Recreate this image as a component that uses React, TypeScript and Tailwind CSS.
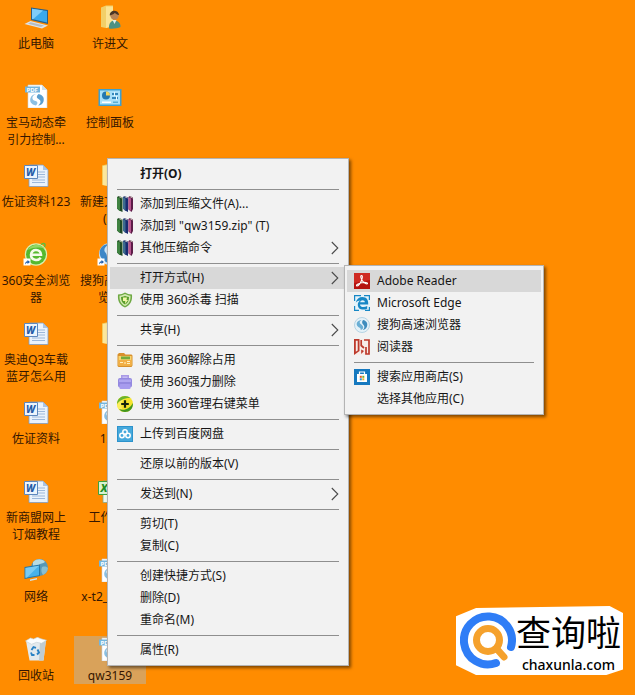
import React from 'react';
import clsx from 'clsx';

type Icon = () => React.ReactElement;

interface Shortcut {
    label: string,
    icon: Icon,
    selected?: boolean
}

interface Entry {
    label: string,
    icon?: Icon,
    bold?: boolean,
    active?: boolean,
    arrow?: boolean,
    submenu?: Entry[][]
}

/* ---------- desktop icons (28x24) ---------- */

const ComputerIcon = () => (
    <svg viewBox="0 0 28 24" className="h-6 w-7">
        <path d="M9 2.500 26 5v14L9 15z" fill="#2b5f86" />
        <path d="M10 3.800 25 6v11.600L10 14z" fill="#39a9ec" />
        <path d="M10 3.800 21 5.400 11 14.200 10 14z" fill="#7fcdf8" />
        <path d="M8.500 16 26 20.500 20 23.500 2.500 19z" fill="#dfe3e6" />
        <path d="M8.500 17.200 22 20.500 19 22 6 18.800z" fill="#b5bcc4" />
    </svg>
);

const UserFolderIcon = () => (
    <svg viewBox="0 0 28 24" className="h-6 w-7">
        <path d="M5 2.500 10 .5h7V21l-7 2-5-1z" fill="#f2cf68" />
        <path d="M10 1.500h7V21l-7 2z" fill="#fbe394" />
        <path d="M13 23.500c-.5-5 2-8 5.500-8s6.500 3 6 6.500c-3 1.500-8 2-11.500 1.500z" fill="#4d9183" />
        <path d="m16.500 15 2 4 2-4z" fill="#e3efe9" />
        <circle cx="18.500" cy="10.500" r="4.200" fill="#b98557" />
        <path d="M13.800 10.500c-.6-6 8.800-6.500 9.300-.5-2 0-3-1.500-4.500-2-1 1.500-3 1.500-4.800 2.500z" fill="#4b3524" />
    </svg>
);

const PdfDocIcon = () => (
    <svg viewBox="0 0 28 24" className="h-6 w-7">
        <path d="M6 1h14l5 5v18H6z" fill="#fff" stroke="#c9d4dc" strokeWidth=".6" />
        <path d="M20 1v5h5z" fill="#cfe0ea" />
        <path d="M3 2.500h15v6H3z" fill="#74b5dc" />
        <text x="4.500" y="7.800" fontSize="6" fontWeight="700" fill="#fff">PDF</text>
        <path d="M14.500 10c-5 1-5.500 6-1 7 2.500.7 2.500 2.500.5 4.500-5-1-6.500-4-5.500-7.500.8-2.500 3.500-4 6-4z" fill="#8cc0e2" />
        <path d="M16.500 10c4.500 1 6 4 5 7.500-.8 2.500-3 4-5.500 4 3-2 3.500-5 .5-6.500-2.300-1-2.300-3 0-5z" fill="#5a9fcf" />
    </svg>
);

const ControlPanelIcon = () => (
    <svg viewBox="0 0 28 24" className="h-6 w-7">
        <path d="M2.500 5h23v17h-23z" fill="#3d9fcf" />
        <path d="M4 6.500h20v14H4z" fill="#a9e0f7" />
        <circle cx="10" cy="11.500" r="4" fill="#2478ae" />
        <path d="M10 11.500v-4a4 4 0 0 1 4 4z" fill="#f4d65e" />
        <path d="M16 9h6v2h-6zM16 13h6v2h-6z" fill="#3387ba" />
        <path d="M18 8h1v4h-1zM20 12h1v4h-1z" fill="#e9faff" />
        <path d="M6 17.500h9v1.500H6z" fill="#fff" />
        <path d="M17 17.500h5v1.500h-5z" fill="#59aed3" />
    </svg>
);

const WordIcon = () => (
    <svg viewBox="0 0 28 24" className="h-6 w-7">
        <path d="M9 2h12l5 5v16.500H7V2z" fill="#eaf2fb" stroke="#7e9cc3" strokeWidth=".8" />
        <path d="M21 2v5h5z" fill="#a9c3e2" />
        <path d="M16 9h7M16 11.500h7M16 14h7M10 17h13M10 19.500h13" stroke="#9db8da" />
        <path d="M2.500 2.500h13v13h-13z" fill="#edf4fc" stroke="#5e88bd" />
        <text x="4" y="13" fontSize="10" fontWeight="800" fontStyle="italic" fill="#255ba7">W</text>
    </svg>
);

const ExcelIcon = () => (
    <svg viewBox="0 0 28 24" className="h-6 w-7">
        <path d="M7 2h14l5 5v16.500H7z" fill="#f0f8ee" stroke="#87a886" strokeWidth=".8" />
        <path d="M2.500 2.500h13v13h-13z" fill="#d9f2d1" stroke="#3fa13c" />
        <text x="4.500" y="13" fontSize="11" fontWeight="800" fontStyle="italic" fill="#1e8c24">X</text>
    </svg>
);

const FolderIcon = () => (
    <svg viewBox="0 0 28 24" className="h-6 w-7">
        <path d="M6 2.500 12 1h9v21l-9 1-6-1z" fill="#f2cb5c" />
        <path d="M7 3 12 2h9v20l-9 1-5-1z" fill="#fce79c" />
    </svg>
);

const ShortcutArrow = () => (
    <g>
        <path d="M1.500 16.500h7v7h-7z" fill="#fff" />
        <path d="M3 22.500c0-2 .8-3 2.500-3.300V18L8 20l-2.500 2v-1.200c-1 0-1.800.5-2.500 1.700z" fill="#1f5fae" />
    </g>
);

const SafeBrowserIcon = () => (
    <svg viewBox="0 0 28 24" className="h-6 w-7">
        <circle cx="14" cy="12.500" r="11.200" fill="#d9efae" />
        <circle cx="14" cy="12.500" r="10" fill="#56b92f" />
        <path d="M6 8a10 10 0 0 1 17-1c-5-2-11-2-17 1z" fill="#93d864" />
        <path d="M9 12.800h10c0-6.300-10-6.500-10 0 0 5.700 7 6.700 9.700 3" fill="none" stroke="#f4fbe9" strokeWidth="2.600" />
        <path d="M19 2.500c3-2 5-1 3.500 2.500" fill="none" stroke="#66bd37" strokeWidth="1.500" />
        <ShortcutArrow />
    </svg>
);

const SogouDesktopIcon = () => (
    <svg viewBox="0 0 28 24" className="h-6 w-7">
        <circle cx="14" cy="12" r="11" fill="#cfe6f6" />
        <path d="M13 2C6 2 2.500 8 4 13c1 4 5 7 9 8-3-5-1-8-4-11-2-3 1-6 4-8z" fill="#3c87c7" />
        <path d="M14 3c8 0 11 6 10 11-1 4-5 7-9 7 4-4 3-8 0-10-3-3-3-5-1-8z" fill="#5aa4d9" />
        <ShortcutArrow />
    </svg>
);

const NetworkIcon = () => (
    <svg viewBox="0 0 28 24" className="h-6 w-7">
        <circle cx="17.500" cy="9.500" r="8.500" fill="#5798b6" />
        <path d="M11 4c4-4 10-3 12 0-2 2-5 1-6 3s-4 2-6 1z" fill="#b7dbe3" />
        <path d="M20 9c3-1 5 0 6 1-.5 4-3 6-5 7-2-3-2-5-1-8z" fill="#89bfd0" />
        <path d="M2.500 9 18 6.500V18L2.500 21z" fill="#2677a8" />
        <path d="M3.500 10 17 7.700v9.500L3.500 19.800z" fill="#48b2ea" />
        <path d="M3.500 10 17 7.700 5 19.500l-1.500.3z" fill="#79cbf3" />
        <path d="M8 21.500 15 20v1.500L8 23z" fill="#d2e2ea" />
    </svg>
);

const RecycleIcon = () => (
    <svg viewBox="0 0 28 24" className="h-6 w-7">
        <path d="m4 4 20-1-2.500 20.500h-14z" fill="#e3eaed" />
        <path d="m18 4 6-1-2.500 20.500H17z" fill="#bfccd2" />
        <path d="m3.500 4 5-3 3 1 4-1.700 3.500 1.500 5.500 1.500-5 3-5-1-5 2z" fill="#fbfdfd" stroke="#c2ced4" strokeWidth=".6" />
        <path d="m9.500 13 2-3 2.500.8M15.500 12.500l1.500 3-2 2M12.500 18H10l-1-2.500" fill="none" stroke="#2982c4" strokeWidth="1.900" />
    </svg>
);

/* ---------- menu icons (16x16) ---------- */

const RarIcon = () => (
    <svg viewBox="0 0 16 16" className="size-4">
        <path d="m0 1 2-1 3.500 1.500V16L2 14.500l-2-2z" fill="#1f4a24" />
        <path d="m0 1 3 1.500V15l-3-2.500z" fill="#3f8241" />
        <path d="m6 1 1.500-1L11 1.500V16l-3-1.500-2-2z" fill="#192b70" />
        <path d="m6 1 2.500 1.500V15L6 12.500z" fill="#3d6b8f" />
        <path d="m11.500 1 1.500-1 3 1.500V13l-1.500 3-3-2.500z" fill="#5c1c48" />
        <path d="M11.500 1 14 2.500V15l-2.500-2z" fill="#b8558f" />
        <path d="m2 .7 3 1.300M7.500.7l3 1.300M13 .7l2.700 1.300" stroke="#dddacb" strokeWidth=".8" />
    </svg>
);

const ShieldIcon = () => (
    <svg viewBox="0 0 16 16" className="size-4">
        <path d="M1 2.500C4 2.500 6 1.500 8 .5c2 1 4 2 7 2 .5 6-1 10.500-7 13-6-2.500-7.500-7-7-13z" fill="#6fa944" />
        <path d="M2.500 3.800C5 3.600 6.500 2.800 8 2c1.500.8 3 1.600 5.500 1.800C13.700 9 12 12 8 14 4 12 2.300 9 2.500 3.800z" fill="#d6ebb5" />
        <path d="M4 5c2 0 3-.6 4-1.200C9 4.400 10 5 12 5c0 3.500-1 6-4 7.500C5 11 4 8.500 4 5z" fill="#5a9e2c" />
        <path d="M6 5.500h4L9.500 8H11l-3 4 .3-3H6z" fill="#f3f7a8" />
    </svg>
);

const UnlockFolderIcon = () => (
    <svg viewBox="0 0 16 16" className="size-4">
        <path d="M.5 2.500 2 1h5l1.500 1.500h6l1 1v10l-1 1.500h-13l-1-1z" fill="#d8902b" />
        <path d="M1.500 4h13v9.500h-13z" fill="#f9d46c" />
        <path d="M4 4.500h9v2.800H4z" fill="#73aa3c" />
        <path d="M1.500 8h13v5.500h-13z" fill="#f3ae45" />
        <path d="M3 10.500h3M8 10v2M10 11.500h3M10 9.500h3" stroke="#fff2c2" />
    </svg>
);

const ForceDeleteIcon = () => (
    <svg viewBox="0 0 16 16" className="size-4">
        <path d="M4 1h8v5H4z" fill="#a99ae5" />
        <path d="M5.500 2.500h5V6h-5z" fill="#c6bcf2" />
        <rect x="1" y="4" width="14" height="9.500" rx="2" fill="#9489e0" />
        <path d="M2 5.500h12v2.500H2z" fill="#b0a6f0" />
        <rect x="2.500" y="10" width="11" height="5" rx="1" fill="#a79bee" />
    </svg>
);

const PlusBallIcon = () => (
    <svg viewBox="0 0 16 16" className="size-4">
        <circle cx="8" cy="8" r="8" fill="#f6e32b" />
        <path d="M.2 10C1 4 5 1 10 1.500c-4 1.500-6 4-5.500 9C4.600 13 6 15 8 16 4 16 1 14 .2 10z" fill="#fcee5b" />
        <path d="M2 13c5 2 11 0 13.800-6C16.500 12 13 16 8 16c-2.500 0-4.500-1-6-3z" fill="#41961f" />
        <path d="M0 8C0 3 4 0 8 0c2 0 4 .7 5.500 2C8 1.500 3 4 0 8z" fill="#6cb52d" />
        <path d="M8 4.200v7.600M4.200 8h7.600" stroke="#15240d" strokeWidth="2.200" />
    </svg>
);

const CloudDiskIcon = () => (
    <svg viewBox="0 0 16 16" className="size-4">
        <path d="M0 0h16v16H0z" fill="#2d93cc" />
        <path d="M1 1h14v14H1z" fill="#46a9dc" />
        <g fill="none" stroke="#fff" strokeWidth="1.500">
            <circle cx="8" cy="6" r="2.200" />
            <circle cx="5" cy="9.500" r="2.200" />
            <circle cx="11" cy="9.500" r="2.200" />
        </g>
    </svg>
);

const AdobeIcon = () => (
    <svg viewBox="0 0 16 16" className="size-4">
        <path d="M0 0h16v16H0z" fill="#b5120f" />
        <path d="M0 0h16v7L0 10z" fill="#cf2a22" />
        <path d="M7.500 2.500c1.500 0 .8 3-.2 5.500S4 13.500 2.800 13c-1.300-.8 1.700-2.700 5-3.300s6-.2 5.700.9c-.4 1.200-3.500-.4-5-2.600S6 2.700 7.500 2.500z" fill="none" stroke="#fff" strokeWidth="1.100" />
    </svg>
);

const EdgeIcon = () => (
    <svg viewBox="0 0 16 16" className="size-4">
        <path d="M0 0h16v16H0z" fill="#e4f3fa" />
        <path d="M0 0h7v1.200H1.200V6H0zM10 0h6v5h-1.200V1.200H10zM0 11h1.200v3.800H5V16H0zM14.800 12H16v4h-5v-1.200h3.800z" fill="#1787c5" />
        <path d="M1.800 7.500C2.600 4 5 2 8.500 2c4 0 5.700 2.800 5.700 6v1.500H6c.2 3 4.300 3.300 7.200 1.500v2.700c-4.700 2-9.400.5-9.400-4 0-2 1-3.400 2.500-4.200-1.700 0-3.300.7-4.500 2z" fill="#1787c5" />
        <path d="M6.100 7.300c.2-2.800 4.900-2.800 4.800 0z" fill="#e4f3fa" />
    </svg>
);

const SogouIcon = () => (
    <svg viewBox="0 0 16 16" className="size-4">
        <circle cx="8" cy="8" r="7.500" fill="#e4f1f8" stroke="#b5d3e3" />
        <path d="M7.500 3C3.500 3.300 2 6 3 8.500c.8 1.800 2.700 2 3.500 3 .4.600.3 1 0 1.500 2.300-.3 3.500-2.500 2-4.300C7.500 7.300 5.500 7 5.700 5.300 5.800 4.200 6.700 3.500 7.500 3z" fill="#6aaed4" />
        <path d="M9 3c3.800.5 5.200 4 3.800 7-.9 1.800-2.300 2.700-4 3 1.800-1.700 2.200-3.800.6-5.300C8 6.400 7.600 4.800 9 3z" fill="#3f8cbd" />
    </svg>
);

const ReaderIcon = () => (
    <svg viewBox="0 0 16 16" className="size-4">
        <path d="M0 0h16v16H0z" fill="#f7ece8" />
        <path d="M0 0h5.500v12L0 16zm1.800 1.800v11L3.700 11.500V1.800z" fillRule="evenodd" fill="#bd3a2c" />
        <path d="M7.200 1v5.500L10 9M10 1h5v14h-3V8" fill="none" stroke="#bd3a2c" strokeWidth="1.700" />
        <path d="M7.200 10.500v4.500L10 12z" fill="#bd3a2c" />
    </svg>
);

const StoreIcon = () => (
    <svg viewBox="0 0 16 16" className="size-4">
        <path d="M0 0h16v16H0z" fill="#1679bf" />
        <path d="M5.500 5V3h5v2" fill="none" stroke="#fff" strokeWidth="1.200" />
        <path d="M3 5h10v8H3z" fill="#fff" />
        <path d="M5.800 6.800h2v2h-2z" fill="#e5582b" />
        <path d="M8.300 6.800h2v2h-2z" fill="#7cb52c" />
        <path d="M5.800 9.300h2v2h-2z" fill="#2b96d8" />
        <path d="M8.300 9.300h2v2h-2z" fill="#efb428" />
    </svg>
);

const ArrowIcon = () => (
    <svg viewBox="0 0 8 14" className="h-3.5 w-2">
        <path d="m.8 1 6 6-6 6" fill="none" stroke="#4a4a4a" strokeWidth="1.100" />
    </svg>
);

const shortcuts: Shortcut[] = [
    { label: '此电脑', icon: ComputerIcon },
    { label: '许进文', icon: UserFolderIcon },
    { label: '宝马动态牵\n引力控制...', icon: PdfDocIcon },
    { label: '控制面板', icon: ControlPanelIcon },
    { label: '佐证资料123', icon: WordIcon },
    { label: '新建文件夹\n(2)', icon: FolderIcon },
    { label: '360安全浏览\n器', icon: SafeBrowserIcon },
    { label: '搜狗高速浏\n览器', icon: SogouDesktopIcon },
    { label: '奥迪Q3车载\n蓝牙怎么用', icon: WordIcon },
    { label: '', icon: FolderIcon },
    { label: '佐证资料', icon: WordIcon },
    { label: '123', icon: PdfDocIcon },
    { label: '新商盟网上\n订烟教程', icon: WordIcon },
    { label: '工作簿1', icon: ExcelIcon },
    { label: '网络', icon: NetworkIcon },
    { label: 'x-t2_ 3159', icon: PdfDocIcon },
    { label: '回收站', icon: RecycleIcon },
    { label: 'qw3159', icon: PdfDocIcon, selected: true }
];

const openWith: Entry[][] = [
    [
        { label: 'Adobe Reader', icon: AdobeIcon, active: true },
        { label: 'Microsoft Edge', icon: EdgeIcon },
        { label: '搜狗高速浏览器', icon: SogouIcon },
        { label: '阅读器', icon: ReaderIcon }
    ],
    [
        { label: '搜索应用商店(S)', icon: StoreIcon },
        { label: '选择其他应用(C)' }
    ]
];

const fileMenu: Entry[][] = [
    [{ label: '打开(O)', bold: true }],
    [
        { label: '添加到压缩文件(A)...', icon: RarIcon },
        { label: '添加到 "qw3159.zip" (T)', icon: RarIcon },
        { label: '其他压缩命令', icon: RarIcon, arrow: true }
    ],
    [
        { label: '打开方式(H)', active: true, arrow: true, submenu: openWith },
        { label: '使用 360杀毒 扫描', icon: ShieldIcon }
    ],
    [{ label: '共享(H)', arrow: true }],
    [
        { label: '使用 360解除占用', icon: UnlockFolderIcon },
        { label: '使用 360强力删除', icon: ForceDeleteIcon },
        { label: '使用 360管理右键菜单', icon: PlusBallIcon }
    ],
    [{ label: '上传到百度网盘', icon: CloudDiskIcon }],
    [{ label: '还原以前的版本(V)' }],
    [{ label: '发送到(N)', arrow: true }],
    [{ label: '剪切(T)' }, { label: '复制(C)' }],
    [{ label: '创建快捷方式(S)' }, { label: '删除(D)' }, { label: '重命名(M)' }],
    [{ label: '属性(R)' }]
];

const Menu = ({ groups, className }: { groups: Entry[][], className: string }) => (
    <div
        role="menu"
        className={clsx(
            'absolute border border-[#b4b4b4] bg-[#f2f2f2] px-0.5 py-1 text-xs text-[#161616] shadow-[2px_2px_3px_rgba(0,0,0,0.5)]',
            className
        )}
    >
        {groups.map((group, i) => (
            <React.Fragment key={i}>
                {i > 0 && (
                    <div role="separator" className="flex h-2 items-center px-[7px]">
                        <div className="h-px w-full bg-[#8f8f8f]" />
                    </div>
                )}
                {group.map((entry) => (
                    <div key={entry.label} className="relative">
                        <button
                            role="menuitem"
                            className={clsx(
                                'flex h-[22px] w-full items-center gap-[7px] px-[7px] text-left whitespace-pre',
                                entry.active && 'bg-[#d8d8d8]',
                                entry.bold && 'font-bold'
                            )}
                        >
                            <span className="size-4 shrink-0">{entry.icon && <entry.icon />}</span>
                            <span className="flex-1">{entry.label}</span>
                            {entry.arrow && <ArrowIcon />}
                        </button>
                        {entry.submenu && (
                            <Menu groups={entry.submenu} className="-top-0.5 left-[234px] z-10 w-[200px]" />
                        )}
                    </div>
                ))}
            </React.Fragment>
        ))}
    </div>
);

const Watermark = () => (
    <div className="absolute right-3 bottom-5 flex h-[69px] w-[167px] items-center bg-white pl-1 [clip-path:polygon(12%_3%,92%_0,100%_10%,100%_92%,90%_100%,12%_100%,0_86%,0_15%)]">
        <svg viewBox="0 0 56 58" className="h-[58px] w-14 shrink-0">
            <path d="M51 35A24 24 0 1 0 36 51" fill="none" stroke="#2f7df6" strokeWidth="8" strokeLinecap="round" />
            <path d="m36 36 8 9" stroke="#f5a12c" strokeWidth="7" strokeLinecap="round" />
            <circle cx="28" cy="28" r="11.500" fill="#fff" stroke="#f5a12c" strokeWidth="7" />
        </svg>
        <div className="flex flex-col items-center pt-1 text-black">
            <span className="font-['Liberation_Sans','Noto_Sans_CJK_SC',sans-serif] text-[35px] leading-[44px] whitespace-nowrap">查询啦</span>
            <span className="text-sm leading-[18px] font-medium">chaxunla.com</span>
        </div>
    </div>
);

const App = () => {
    return (
        <main className="relative h-screen w-full overflow-hidden bg-[#ff8c00] font-['Noto_Sans','Noto_Sans_CJK_SC',sans-serif]">
            <div className="grid auto-rows-[79px] grid-cols-[72px_72px] items-start gap-x-0.5 pt-1">
                {shortcuts.map((item, i) => (
                    <button
                        key={i}
                        className={clsx(
                            'flex min-h-12 flex-col items-center gap-1.5 pt-px text-xs text-[#351600]',
                            item.selected && 'bg-[#d9a25a]'
                        )}
                    >
                        <item.icon />
                        <span className="text-center leading-[17px] whitespace-pre">{item.label}</span>
                    </button>
                ))}
            </div>
            <Menu groups={fileMenu} className="top-[158px] left-[107px] w-[242px]" />
            <Watermark />
        </main>
    );
};

export default App;
